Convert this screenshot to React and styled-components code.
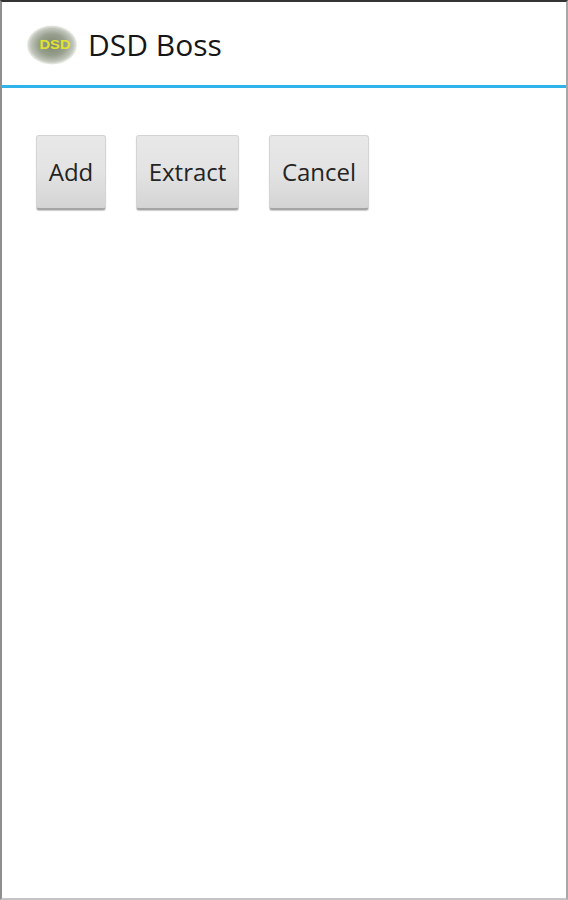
import React from "react";
import styled, { createGlobalStyle } from "styled-components";

const Global = createGlobalStyle`
  html, body { margin: 0; padding: 0; background: #fff; }
  body { font-family: "Open Sans", "Noto Sans", sans-serif; }
`;

const Screen = styled.div`
  box-sizing: border-box;
  width: 568px;
  height: 900px;
  background: #fff;
  border-top: 2px solid #333;
  border-left: 2px solid #8f8f8f;
  border-right: 2px solid #a8a8a8;
  border-bottom: 2px solid #c4c4c4;
  display: flex;
  flex-direction: column;
`;

const TitleBar = styled.header`
  box-sizing: border-box;
  height: 86px;
  flex: none;
  display: flex;
  align-items: center;
  padding: 0 0 0 25px;
  gap: 11px;
  border-bottom: 3px solid #2fb3e8;
`;

const Logo = styled.svg`
  width: 50px;
  height: 40px;
  flex: none;
  margin-top: 2px;
`;

const Title = styled.h1`
  margin: 2px 0 0;
  font-size: 30px;
  line-height: 40px;
  font-weight: 400;
  color: #161616;
`;

const Actions = styled.div`
  display: flex;
  align-items: flex-start;
  gap: 30px;
  padding: 47px 0 0 34px;
`;

const Action = styled.button`
  box-sizing: border-box;
  width: ${(p) => p.$w}px;
  height: 75px;
  padding: 0;
  border: 1px solid #d4d4d4;
  border-bottom: 2px solid #a5a5a5;
  border-radius: 3px;
  background: linear-gradient(180deg, #e8e8e8 0%, #e3e3e3 50%, #d4d4d4 100%);
  box-shadow: 0 1px 1px rgba(0, 0, 0, 0.2);
  font-family: "Open Sans", "Noto Sans", sans-serif;
  font-size: 24px;
  line-height: 72px;
  color: #242424;
  text-align: center;
`;

export default function App() {
  return (
    <>
      <Global />
      <Screen>
        <TitleBar>
          <Logo viewBox="0 0 50 40" aria-hidden="true">
            <defs>
              <radialGradient id="orb" cx="50%" cy="50%" r="50%">
                <stop offset="0%" stopColor="#7d8670" />
                <stop offset="55%" stopColor="#979f8e" />
                <stop offset="85%" stopColor="#c0c5ba" />
                <stop offset="100%" stopColor="#eceee9" />
              </radialGradient>
            </defs>
            <ellipse cx="25" cy="20" rx="25" ry="19.5" fill="url(#orb)" />
            <text
              x="28"
              y="24"
              textAnchor="middle"
              fontFamily="Liberation Sans, sans-serif"
              fontWeight="700"
              fontSize="12"
              textLength="31"
              lengthAdjust="spacingAndGlyphs"
              fill="#e2e32e"
            >
              DSD
            </text>
          </Logo>
          <Title>DSD Boss</Title>
        </TitleBar>
        <Actions>
          <Action $w={70}>Add</Action>
          <Action $w={103}>Extract</Action>
          <Action $w={100}>Cancel</Action>
        </Actions>
      </Screen>
    </>
  );
}
